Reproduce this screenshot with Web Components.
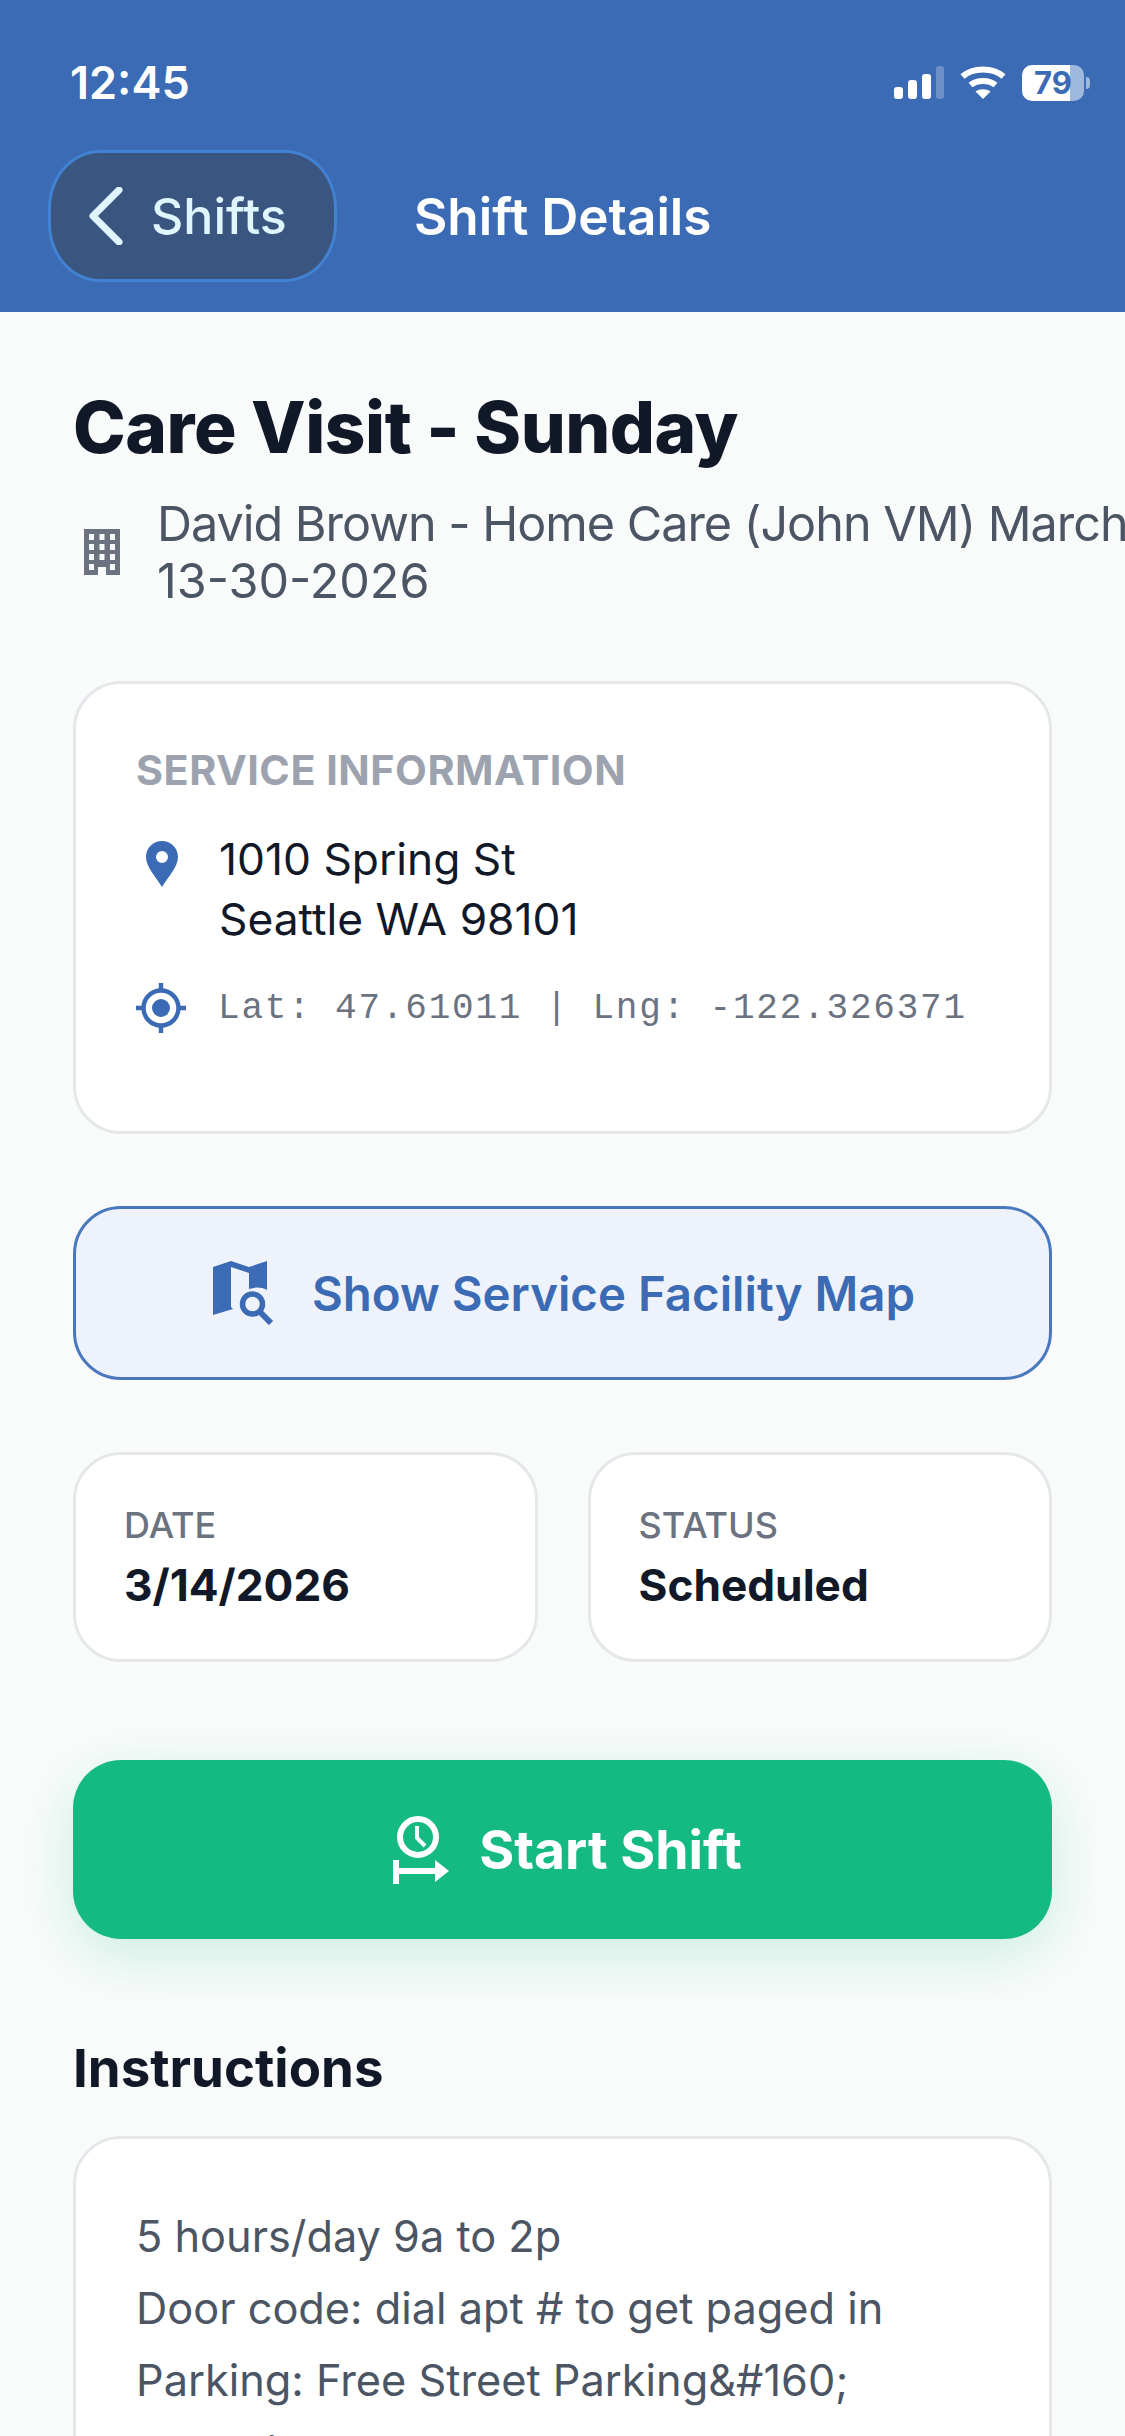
<!DOCTYPE html>
<html lang="en">
<head>
<meta charset="utf-8">
<title>Shift Details</title>
<style>
    html, body { margin: 0; padding: 0; width: 1125px; height: 2436px; overflow: hidden; background: #f9fbfb; }
    body { font-family: Inter, "Liberation Sans", sans-serif; }
</style>
</head>
<body>
<shift-app>
    <app-header slot="header" back="Shifts" heading="Shift Details" time="12:45" battery="79"></app-header>
    <visit-title heading="Care Visit - Sunday" sub="David Brown - Home Care (John VM) March 13-30-2026"></visit-title>
    <service-card lines="1010 Spring St|Seattle WA 98101" coords="Lat: 47.61011 | Lng: -122.326371"></service-card>
    <map-button label="Show Service Facility Map"></map-button>
    <info-grid>
        <info-tile label="DATE" value="3/14/2026"></info-tile>
        <info-tile label="STATUS" value="Scheduled"></info-tile>
    </info-grid>
    <start-button label="Start Shift"></start-button>
    <instructions-card heading="Instructions">
        <div>5 hours/day 9a to 2p</div>
        <div>Door code: dial apt # to get paged in</div>
        <div>Parking: Free Street Parking&amp;#160;</div>
        <div>Hours/Call: VVVV</div>
    </instructions-card>
</shift-app>

<script>
class ShiftApp extends HTMLElement {
    connectedCallback() {
        this.attachShadow({ mode: 'open' });
        this.shadowRoot.innerHTML = `
            <style>
                :host { display: block; width: 1125px; height: 2436px; overflow: hidden; background: #f9fbfb; color: #111827; }
                .content { display: flex; flex-direction: column; padding: 0 73px; }
            </style>
            <slot name="header"></slot>
            <div class="content"><slot></slot></div>
        `;
    }
}

class AppHeader extends HTMLElement {
    connectedCallback() {
        const back = this.getAttribute('back') || '';
        const heading = this.getAttribute('heading') || '';
        const time = this.getAttribute('time') || '';
        const battery = this.getAttribute('battery') || '';
        this.attachShadow({ mode: 'open' });
        this.shadowRoot.innerHTML = `
            <style>
                :host { display: block; height: 312px; box-sizing: border-box; background: #3b6bb5; color: #fff; padding: 0 35px 0 48px; }
                .status { display: flex; justify-content: space-between; align-items: center; height: 46px; padding: 60px 0 0 22px; }
                .time { font-size: 45px; font-weight: 600; line-height: 46px; }
                .icons { display: flex; align-items: center; gap: 16px; }
                .batt { position: relative; display: flex; align-items: center; justify-content: center; width: 62px; height: 36px; box-sizing: border-box; border-radius: 10px;
                    background: linear-gradient(90deg, #fff 0 78%, #9fb8de 78%); color: #3b6bb5; font-size: 31px; font-weight: 700; line-height: 36px; margin-right: 6px; }
                .batt::after { content: ''; position: absolute; left: 64px; top: 12px; width: 4px; height: 12px; background: #9fb8de; border-radius: 0 6px 6px 0; }
                .nav { display: flex; align-items: center; gap: 77px; margin-top: 44px; }
                .back { display: flex; align-items: center; gap: 28px; width: 289px; height: 132px; box-sizing: border-box; padding-left: 38px;
                    background: #3a5680; border: 3px solid #4282d2; border-radius: 52px / 58px; color: #dff6ff; font-size: 50px; font-weight: 500; }
                .title { font-size: 51.300px; font-weight: 600; }
            </style>
            <div class="status">
                <span class="time">${time}</span>
                <span class="icons">
                    <svg width="50" height="34" viewBox="0 0 50 34">
                        <rect x="0" y="21" width="9" height="12" rx="3" fill="#fff"/>
                        <rect x="14" y="14" width="9" height="19" rx="3" fill="#fff"/>
                        <rect x="28" y="8" width="9" height="25" rx="3" fill="#fff"/>
                        <rect x="42" y="0" width="8" height="33" rx="3" fill="#fff" opacity=".25"/>
                    </svg>
                    <svg width="46" height="34" viewBox="0 0 46 34" fill="none" stroke="#fff" stroke-width="6">
                        <path d="M2.5 10.5C13 1 33 1 43.5 10.5"/>
                        <path d="M10.5 19C17 13.500 29 13.500 35.500 19"/>
                        <path d="M23 33L15.500 25.500C19.500 22.500 26.500 22.500 30.500 25.500Z" fill="#fff" stroke="none"/>
                    </svg>
                    <span class="batt">${battery}</span>
                </span>
            </div>
            <div class="nav">
                <div class="back">
                    <svg width="34" height="58" viewBox="0 0 34 58" fill="none" stroke="#dff6ff" stroke-width="7" stroke-linecap="round" stroke-linejoin="round"><path d="M30 3L4 29L30 55"/></svg>
                    <span>${back}</span>
                </div>
                <span class="title">${heading}</span>
            </div>
        `;
    }
}

class VisitTitle extends HTMLElement {
    connectedCallback() {
        this.attachShadow({ mode: 'open' });
        this.shadowRoot.innerHTML = `
            <style>
                :host { display: block; padding-top: 74px; }
                h1 { margin: 0; font-size: 71px; font-weight: 800; line-height: 82px; color: #111827; letter-spacing: -0.5px; }
                .sub { display: flex; align-items: center; gap: 37px; margin-top: 27px; width: 1100px; padding-left: 11px; box-sizing: border-box; }
                .sub span { flex: 1; font-size: 48.500px; line-height: 57px; color: #4b5563; }
                .sub span::first-line { letter-spacing: -1px; }
                svg { flex: none; }
            </style>
            <h1>${this.getAttribute('heading') || ''}</h1>
            <div class="sub">
                <svg width="36" height="46" viewBox="0 0 36 46">
                    <path fill="#6b7280" fill-rule="evenodd" d="M0 0H36V46H22V38H14V46H0ZM5 5V11H10V5ZM15.500 5V11H20.500V5ZM26 5V11H31V5ZM5 15V21H10V15ZM15.500 15V21H20.500V15ZM26 15V21H31V15ZM5 25V31H10V25ZM15.500 25V31H20.500V25ZM26 25V31H31V25ZM5 35V41H10V35ZM26 35V41H31V35Z"/>
                </svg>
                <span>${this.getAttribute('sub') || ''}</span>
            </div>
        `;
    }
}

class ServiceCard extends HTMLElement {
    connectedCallback() {
        const lines = (this.getAttribute('lines') || '').split('|');
        this.attachShadow({ mode: 'open' });
        this.shadowRoot.innerHTML = `
            <style>
                :host { display: block; box-sizing: border-box; height: 453px; margin-top: 72px; background: #fff; border: 3px solid #e5e7eb; border-radius: 48px; padding: 63px 60px 0 60px; }
                .label { font-size: 41.300px; font-weight: 700; line-height: 46px; color: #9ca3af; letter-spacing: 0.5px; }
                .row { display: flex; gap: 41px; margin-top: 36px; }
                .row svg { flex: none; margin: 12px 0 0 10px; }
                .addr { font-size: 44.300px; line-height: 60px; color: #111827; }
                .geo { display: flex; align-items: center; gap: 32px; margin-top: 34px; }
                .geo span { font-family: "Liberation Mono", monospace; font-size: 36px; letter-spacing: 1.800px; color: #6b7280; white-space: pre; }
            </style>
            <div class="label">SERVICE INFORMATION</div>
            <div class="row">
                <svg width="32" height="46" viewBox="0 0 32 46"><path fill="#3b6bb5" fill-rule="evenodd" d="M16 0C7 0 0 7 0 16C0 26 10 36 16 46C22 36 32 26 32 16C32 7 25 0 16 0ZM16 10A6 6 0 1 1 16 22A6 6 0 1 1 16 10Z"/></svg>
                <div class="addr">${lines.map((l) => `<div>${l}</div>`).join('')}</div>
            </div>
            <div class="geo">
                <svg width="50" height="50" viewBox="0 0 50 50" fill="none" stroke="#3b6bb5" stroke-width="4.500">
                    <circle cx="25" cy="25" r="17.500"/>
                    <path d="M25 0V8M25 42V50M0 25H8M42 25H50"/>
                    <circle cx="25" cy="25" r="9" fill="#3b6bb5" stroke="none"/>
                </svg>
                <span>${this.getAttribute('coords') || ''}</span>
            </div>
        `;
    }
}

class MapButton extends HTMLElement {
    connectedCallback() {
        this.attachShadow({ mode: 'open' });
        this.shadowRoot.innerHTML = `
            <style>
                :host { display: flex; align-items: center; justify-content: center; gap: 37px; box-sizing: border-box; height: 174px; margin-top: 72px; padding-left: 3px; background: #eef3fb; border: 3px solid #4a78bf; border-radius: 48px; color: #3b6bb5; font-size: 47.400px; font-weight: 600; }
            </style>
            <svg width="62" height="64" viewBox="0 0 62 64">
                <path fill="#3b6bb5" d="M0 6L18 0L36 6L54 0V29C48 26 42 26 36 28V12L18 6V46L20 48L0 54Z"/>
                <circle cx="39.500" cy="43" r="10" fill="#eef3fb" stroke="#3b6bb5" stroke-width="5.500"/>
                <path d="M47 51L58 62" stroke="#3b6bb5" stroke-width="6"/>
            </svg>
            <span>${this.getAttribute('label') || ''}</span>
        `;
    }
}

class InfoGrid extends HTMLElement {
    connectedCallback() {
        this.attachShadow({ mode: 'open' });
        this.shadowRoot.innerHTML = `
            <style>
                :host { display: grid; grid-template-columns: 1fr 1fr; gap: 50px; margin-top: 72px; }
            </style>
            <slot></slot>
        `;
    }
}

class InfoTile extends HTMLElement {
    connectedCallback() {
        this.attachShadow({ mode: 'open' });
        this.shadowRoot.innerHTML = `
            <style>
                :host { display: block; box-sizing: border-box; height: 210px; background: #fff; border: 3px solid #e5e7eb; border-radius: 48px; padding: 48px 48px 0; }
                .label { font-size: 36px; font-weight: 500; line-height: 44px; color: #6b7280; }
                .value { font-size: 44.200px; font-weight: 700; line-height: 56px; color: #111827; margin-top: 10px; }
            </style>
            <div class="label">${this.getAttribute('label') || ''}</div>
            <div class="value">${this.getAttribute('value') || ''}</div>
        `;
    }
}

class StartButton extends HTMLElement {
    connectedCallback() {
        this.attachShadow({ mode: 'open' });
        this.shadowRoot.innerHTML = `
            <style>
                :host { display: flex; align-items: center; justify-content: center; gap: 30px; height: 179px; margin-top: 98px; padding-left: 10px; background: #14ba82; border-radius: 48px; box-shadow: 0 16px 60px rgba(20, 186, 130, .2); color: #fff; font-size: 53.500px; font-weight: 700; }
            </style>
            <svg width="56" height="68" viewBox="0 0 56 68">
                <circle cx="25" cy="21" r="18" fill="none" stroke="#fff" stroke-width="6"/>
                <path d="M24 10V22L32 30" fill="none" stroke="#fff" stroke-width="4"/>
                <path fill="#fff" d="M0 44H6V52H42V44L56 55L42 66V58H6V68H0Z"/>
            </svg>
            <span>${this.getAttribute('label') || ''}</span>
        `;
    }
}

class InstructionsCard extends HTMLElement {
    connectedCallback() {
        this.attachShadow({ mode: 'open' });
        this.shadowRoot.innerHTML = `
            <style>
                :host { display: block; margin-top: 97px; }
                h2 { margin: 0; font-size: 52.800px; font-weight: 700; line-height: 64px; color: #111827; }
                .box { box-sizing: border-box; margin-top: 36px; height: 600px; background: #fff; border: 3px solid #e5e7eb; border-radius: 48px; padding: 61px 60px; font-size: 43.300px; line-height: 72px; color: #4b5563; }
            </style>
            <h2>${this.getAttribute('heading') || ''}</h2>
            <div class="box"><slot></slot></div>
        `;
    }
}

customElements.define('shift-app', ShiftApp);
customElements.define('app-header', AppHeader);
customElements.define('visit-title', VisitTitle);
customElements.define('service-card', ServiceCard);
customElements.define('map-button', MapButton);
customElements.define('info-grid', InfoGrid);
customElements.define('info-tile', InfoTile);
customElements.define('start-button', StartButton);
customElements.define('instructions-card', InstructionsCard);
</script>
</body>
</html>
